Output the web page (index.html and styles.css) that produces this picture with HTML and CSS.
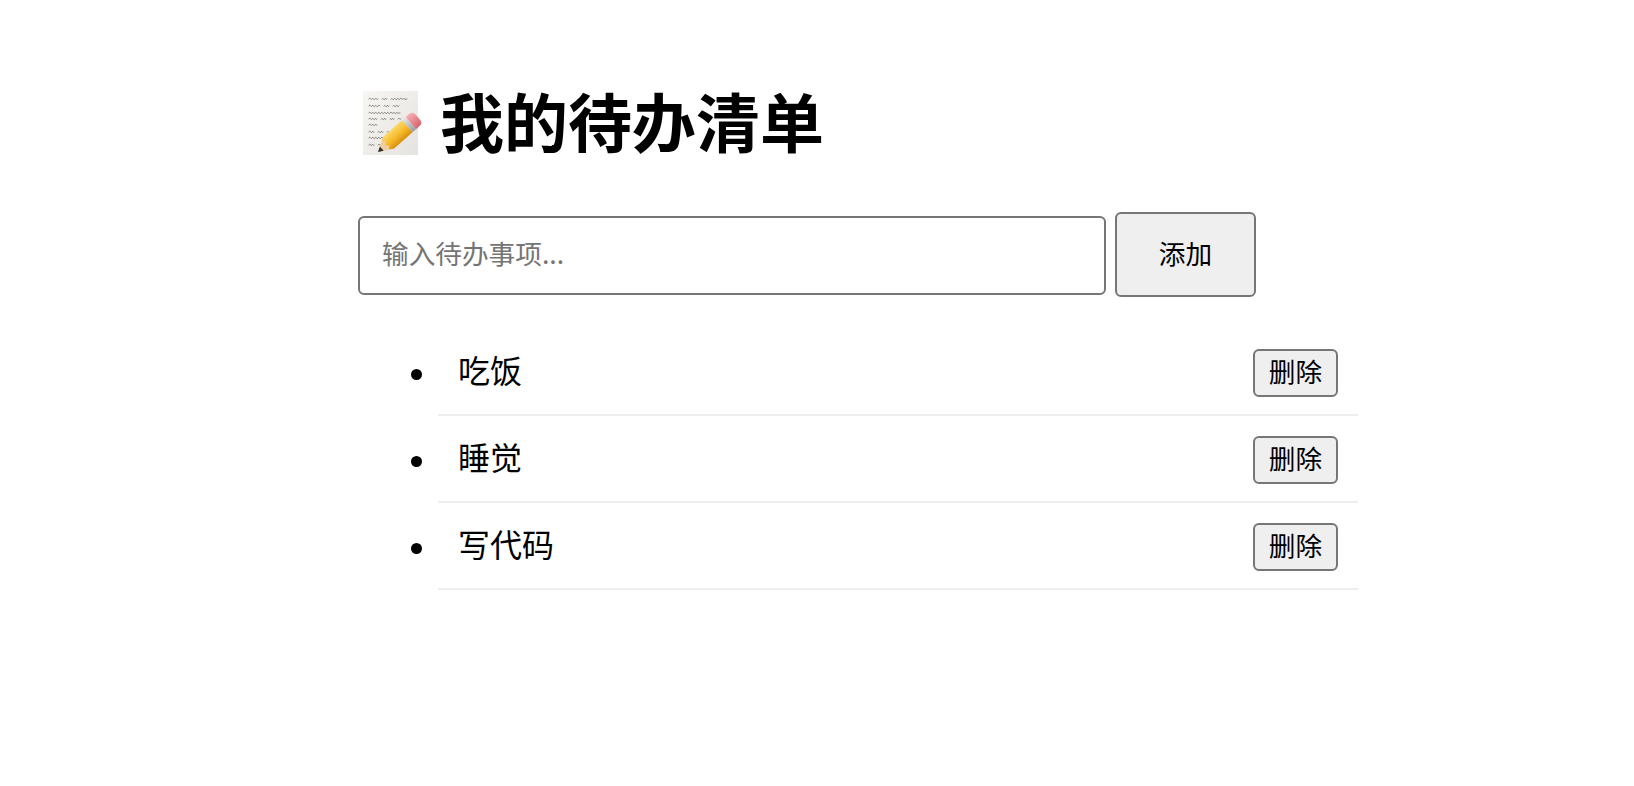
FILE: index.html
```html
<!doctype html>
<html lang="zh">
  <head>
    <meta charset="utf-8">
    <title>我的待办清单</title>
    <link rel="stylesheet" href="styles.css">
  </head>
  <body>
    <div class="app">
      <h1 class="title">
        <svg class="memo" viewBox="0 0 60 66" width="60" height="66" aria-hidden="true">
          <defs>
            <linearGradient id="paper" x1="0" y1="0" x2="1" y2="1">
              <stop offset="0" stop-color="#f7f6f3"/>
              <stop offset="1" stop-color="#e4e3df"/>
            </linearGradient>
            <linearGradient id="wood" x1="0" y1="0" x2="0" y2="1">
              <stop offset="0" stop-color="#fbd968"/>
              <stop offset=".55" stop-color="#f6b929"/>
              <stop offset="1" stop-color="#d98f10"/>
            </linearGradient>
            <linearGradient id="rubber" x1="0" y1="0" x2="0" y2="1">
              <stop offset="0" stop-color="#f6b0b4"/>
              <stop offset="1" stop-color="#d8636c"/>
            </linearGradient>
            <linearGradient id="steel" x1="0" y1="0" x2="0" y2="1">
              <stop offset="0" stop-color="#e6e6e6"/>
              <stop offset="1" stop-color="#9c9c9c"/>
            </linearGradient>
          </defs>
          <rect x="0" y="0" width="55" height="64" fill="url(#paper)"/>
          <g fill="none" stroke="#3f3f3a" stroke-width=".6" stroke-linecap="round">
            <path d="M6 8c1-3 2 2 3 0s2 2 3 0 2 2 3 0M19 8c1-2 2 2 3 0s1 2 2 0M28 8c1-2 2 2 3 0s2 2 3 0 2 2 3 0 2 1 3 0 2 1 4 0"/>
            <path d="M6 15c1-3 2 2 3 0s2 2 3 0 2 2 3 0 2 1 2 0M21 15c1-2 2 2 3 0s1 2 2 0M30 15c1-2 2 2 3 0s2 2 3 0"/>
            <path d="M6 22c1-3 2 2 3 0s2 2 3 0 2 2 3 0 2 2 3 0 2 2 3 0 2 2 3 0 2 2 3 0 2 1 3 0 2 1 3 0 2 1 4 0"/>
            <path d="M6 28c1-3 2 2 3 0s2 2 3 0 1 2 2 0M18 28c1-2 2 2 3 0s1 2 2 0M27 28c1-2 1 2 2 0s1 2 2 0M35 28c1-2 2 1 3 0"/>
            <path d="M6 34c1-3 2 2 3 0s2 2 3 0 1 1 2 0"/>
            <path d="M6 41c1-3 2 2 3 0s1 2 2 0M15 41c1-2 2 2 3 0s1 2 2 0M24 41c1-2 2 2 3 0s1 1 2 0"/>
            <path d="M6 47c1-3 2 2 3 0s2 2 3 0 2 2 3 0 2 2 3 0 2 1 3 0"/>
            <path d="M6 54c1-3 2 2 3 0s1 2 2 0M15 54c1-2 2 1 3 0"/>
          </g>
          <g transform="translate(15 61) rotate(-41.4)">
            <path d="M0 0L14-8V8z" fill="#efcf9f"/>
            <path d="M0 0L5-2.8V2.8z" fill="#2b2b2b"/>
            <path d="M14-8H39V8H14l-4-2.7 3-2.6-3-2.7 3-2.6-3-2.7z" fill="url(#wood)"/>
            <rect x="39" y="-8" width="5" height="16" fill="url(#steel)"/>
            <path d="M44-8h4q5 0 5 5v6q0 5-5 5h-4z" fill="url(#rubber)"/>
          </g>
        </svg>
        <span>我的待办清单</span>
      </h1>

      <form class="add-form">
        <input class="add-input" type="text" placeholder="输入待办事项...">
        <button class="add-btn" type="button">添加</button>
      </form>

      <ul class="todo-list">
        <li class="todo"><button class="del-btn" type="button">删除</button>吃饭</li>
        <li class="todo"><button class="del-btn" type="button">删除</button>睡觉</li>
        <li class="todo"><button class="del-btn" type="button">删除</button>写代码</li>
      </ul>
    </div>
  </body>
</html>
```

FILE: styles.css
```css
* {
  box-sizing: border-box;
}

html,
body {
  margin: 0;
  padding: 0;
  background: #fff;
}
body {
  font-family: "Noto Sans CJK SC", "Liberation Sans", sans-serif;
  color: #000;
}
.app {
  width: 1000px;
  margin-left: 358px;
  padding-top: 74px;
}
.title {
  display: flex;
  align-items: center;
  gap: 17px;
  margin: 0 0 48px;
  height: 90px;
  font-size: 64px;
  font-weight: bold;
  line-height: 90px;
}
.memo {
  flex: none;
  margin: 10px 0 0 5px;
  overflow: visible;
  filter: blur(.35px);
}
.add-form {
  display: flex;
  align-items: flex-start;
  gap: 9px;
}
.add-input {
  width: 748px;
  height: 79px;
  margin-top: 4px;
  padding: 0 22px 6px;
  border: 2px solid #767676;
  border-radius: 6px;
  font: inherit;
  font-size: 26.67px;
  background: #fff;
}
.add-input::placeholder {
  color: #757575;
}
.add-btn {
  width: 141px;
  height: 85px;
  padding: 0 0 5px;
  border: 2px solid #767676;
  border-radius: 6px;
  font: inherit;
  font-size: 26.67px;
  background: #efefef;
  color: #000;
}
.todo-list {
  margin: 32px 0 0;
  padding: 0 0 0 80px;
  list-style: none;
}
.todo {
  position: relative;
  height: 87px;
  padding: 20px 20px 0;
  border-bottom: 2px solid #eee;
  font-size: 32px;
  line-height: 40px;
}
.todo::before {
  content: "";
  position: absolute;
  left: -27px;
  top: 40px;
  width: 11px;
  height: 11px;
  border-radius: 50%;
  background: #000;
}
.del-btn {
  float: right;
  width: 85px;
  height: 48px;
  padding: 0 0 4px;
  border: 2px solid #767676;
  border-radius: 6px;
  font: inherit;
  font-size: 26.67px;
  line-height: 40px;
  background: #efefef;
  color: #000;
}
```
